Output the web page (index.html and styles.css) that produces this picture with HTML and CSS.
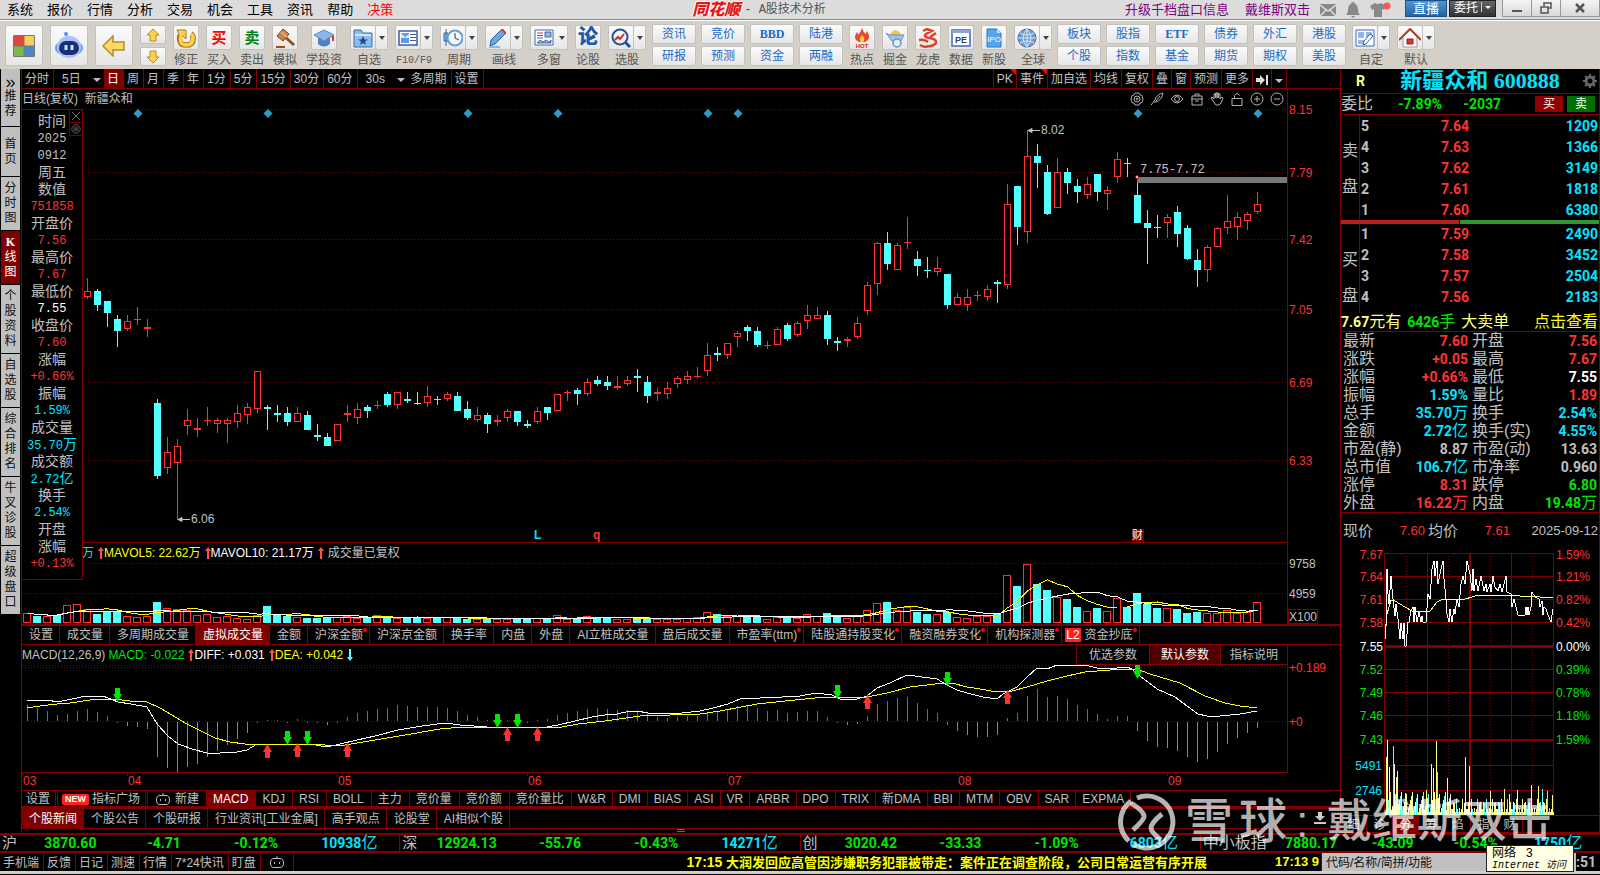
FILE: index.html
```html
<!DOCTYPE html>
<html lang="zh-CN">
<head>
    <meta charset="UTF-8">
    <meta name="viewport" content="width=device-width, initial-scale=1.0">
    <title>同花顺 - A股技术分析</title>
    <link rel="stylesheet" href="styles.css">
</head>
<body>
    <svg class="defs" aria-hidden="true">
        <symbol id="up" viewBox="0 0 6 12"><path d="M3 0L6 4H4V12H2V4H0z"/></symbol>
        <symbol id="down" viewBox="0 0 6 12"><path d="M3 12L6 8H4V0H2V8H0z"/></symbol>
        <symbol id="gear" viewBox="0 0 14 14"><path fill="none" stroke="currentColor" d="M5 1h4l1 2 2 .5L13 7l-1 3.500-2 .5-1 2H5l-1-2-2-.5L1 7l1-3.500L4 3z"/><circle cx="7" cy="7" r="3" fill="none" stroke="currentColor"/><circle cx="7" cy="7" r="1" fill="none" stroke="currentColor"/></symbol>
        <symbol id="robot" viewBox="0 0 16 14"><path fill="none" stroke="currentColor" d="M5 3.500h6q3.500 0 3.500 4.500t-3.500 4.500H5Q1.500 12.500 1.500 8T5 3.500zM8 3V1M5.500 7v2M10.500 7v2"/></symbol>
    </svg>
    <div class="app">
        <header class="titlebar">
            <nav class="menu">
                <a href="#">系统</a><a href="#">报价</a><a href="#">行情</a><a href="#">分析</a><a href="#">交易</a><a href="#">机会</a><a href="#">工具</a><a href="#">资讯</a><a href="#">帮助</a><a href="#" class="red">决策</a>
            </nav>
            <div class="title"><b>同花顺</b><span>- A股技术分析</span></div>
            <div class="account">
                <a href="#">升级千档盘口信息</a>
                <a href="#">戴维斯双击</a>
                <svg width="16" height="12" viewBox="0 0 16 12"><path fill="#888" d="M0 0h16v12H0z"/><path fill="none" stroke="#ddd" stroke-width="1.500" d="M0 1l8 6 8-6M0 12l6-6M16 12l-6-6"/></svg>
                <svg width="14" height="16" viewBox="0 0 14 16"><path fill="#888" d="M7 0q2 0 2 2 3 1 3 6 0 3 2 5H0q2-2 2-5 0-5 3-6 0-2 2-2zM5 14h4l-2 2z"/></svg>
                <svg width="21" height="15" viewBox="0 0 21 15"><path fill="#888" d="M5 1q3 2 6 0l5 3-2 4-2-1v8H4V7L2 8 0 4z"/><circle cx="17" cy="4" r="3.500" fill="#f55"/></svg>
            </div>
            <button class="live">直播</button>
            <button class="trade">委托<i></i><span class="caret"></span></button>
            <div class="window">
                <button aria-label="最小化"><svg width="12" height="12"><path fill="#555" d="M1 8h10v2H1z"/></svg></button>
                <button aria-label="还原"><svg width="12" height="12"><path fill="none" stroke="#555" stroke-width="1.500" d="M4 4V1h7v5H8M1 5h7v6H1z"/></svg></button>
                <button aria-label="关闭"><svg width="12" height="12"><path fill="none" stroke="#555" stroke-width="2.500" d="M2 2l8 8M10 2l-8 8"/></svg></button>
            </div>
        </header>

        <div class="toolbar">
            <button class="big" aria-label="首页"><svg width="22" height="22" viewBox="0 0 22 22"><path fill="#e0453c" d="M1 1h10v10H1z"/><path fill="#f7cf5b" d="M11 1h10v10H11z"/><path fill="#7fb84a" d="M1 11h10v10H1z"/><path fill="#4b86c8" d="M11 11h10v10H11z"/><path fill="none" stroke="#777" d="M.5 .5h21v21H.5zM11 1v20M1 11h20"/></svg></button>
            <button class="big" aria-label="助手"><svg width="30" height="30" viewBox="0 0 30 30"><circle cx="12" cy="3" r="2" fill="#5a8cf0"/><path stroke="#5a8cf0" d="M12 3l2 4"/><ellipse cx="15" cy="17" rx="14" ry="8" fill="#6d9bf5"/><ellipse cx="15" cy="16" rx="12" ry="11" fill="#a9c2fb"/><rect x="5" y="10" width="20" height="14" rx="7" fill="#1d2f73"/><path stroke="#b8ecff" stroke-width="3" d="M12 14v5M18 14v5"/></svg></button>
            <button class="big" aria-label="后退"><svg width="24" height="22" viewBox="0 0 24 22"><path fill="#ffd964" stroke="#b58a2a" stroke-width="1.500" d="M1 11L11 1v6h11v8H11v6z"/></svg></button>
            <div class="updown">
                <button aria-label="上"><svg width="14" height="14" viewBox="0 0 14 14"><path fill="#ffd24a" stroke="#b58a2a" d="M7 1l6 6h-3v6H4V7H1z"/></svg></button>
                <button aria-label="下"><svg width="14" height="14" viewBox="0 0 14 14"><path fill="#ffd24a" stroke="#b58a2a" d="M7 13L1 7h3V1h6v6h3z"/></svg></button>
            </div>
            <button class="tool"><span class="ico"><svg width="20" height="20" viewBox="0 0 20 20"><path fill="none" stroke="#a87a20" stroke-width="5.500" d="M4 7Q2 17 10 17t7-7q0-3-2-4"/><path fill="#ffd24a" stroke="#a87a20" d="M1 2h9v9L7 8 4 9z"/><path fill="none" stroke="#ffd24a" stroke-width="3.500" d="M5 8Q3 17 10 17t7-7q0-3-2-4"/></svg></span>修正</button>
            <button class="tool"><span class="ico buy">买</span>买入</button>
            <button class="tool"><span class="ico sell">卖</span>卖出</button>
            <button class="tool"><span class="ico"><svg width="20" height="20" viewBox="0 0 20 20"><path stroke="#8c5226" stroke-width="3" d="M9 8l10 9"/><path fill="#c58449" stroke="#7c431b" d="M8 1l6 5-6 7-6-5z"/><path stroke="#e3ad77" stroke-width="2" d="M6 4l6 5"/><path fill="#a14c12" d="M1 18h9v2H1z"/></svg></span>模拟</button>
            <button class="tool wide"><span class="ico"><svg width="22" height="20" viewBox="0 0 22 20"><path fill="#4d83c0" d="M5 9v7q6 5 12 0V9z"/><path fill="#8ab8ea" stroke="#5a88bb" d="M11 2l10 5-10 6L1 7z"/><path stroke="#d33" stroke-width="2" d="M20 8v5"/></svg></span>学投资</button>
            <button class="tool split"><span class="ico"><svg width="20" height="20" viewBox="0 0 20 20"><path fill="#8bbdf0" stroke="#3d6ea5" d="M1 2h7l2 3h9v14H1z"/><path fill="#cfe4fa" d="M2 6h16v2H2z"/><path fill="#1d4c8c" d="M10 8l1.500 3.500H15l-3 2 1 3.500-3-2-3 2 1-3.500-3-2h3.500z"/></svg></span><span class="drop"><i class="caret"></i></span><em>自选</em></button>
            <button class="tool split"><span class="ico"><svg width="20" height="20" viewBox="0 0 20 20"><path fill="#fff" stroke="#3d5e9a" stroke-width="1.500" d="M1 3h18v14H1z"/><path fill="#5f9be0" d="M3 5h8v10H3z"/><path fill="#cfe4fa" d="M3 5l4 4 4-3v4H3z"/><path stroke="#3d5e9a" d="M12 6.500h6M12 9.500h6M12 12.500h6"/></svg></span><span class="drop"><i class="caret"></i></span><em class="mono">F10/F9</em></button>
            <button class="tool split"><span class="ico"><svg width="20" height="20" viewBox="0 0 20 20"><path fill="#9cc4ee" stroke="#2f66a8" d="M3 1v17M1 5h4v8H1z"/><circle cx="12" cy="10" r="7.500" fill="#f4f9ff" stroke="#6b9cd0" stroke-width="2"/><path fill="none" stroke="#333" d="M12 5v5l4 2"/></svg></span><span class="drop"><i class="caret"></i></span><em>周期</em></button>
            <button class="tool split"><span class="ico"><svg width="20" height="20" viewBox="0 0 20 20"><path fill="#6fa6de" stroke="#31649c" d="M2 18l1-6L14 1l4 4L7 16z"/><path fill="#d9362b" d="M13 2l2-1 3 3-1 2z"/><path stroke="#8db7e4" stroke-width="2" d="M1 19h11"/></svg></span><span class="drop"><i class="caret"></i></span><em>画线</em></button>
            <button class="tool split plain"><span class="ico"><svg width="20" height="20" viewBox="0 0 20 20"><path fill="#fff" stroke="#4667a8" d="M1 2h18v15H1z"/><path stroke="#d33" d="M3 5h6"/><path stroke="#4667a8" d="M3 7.500h6M3 10h6"/><path fill="#8db7e4" stroke="#4667a8" d="M11 4h6v5h-6zM3 15l3-3 3 2 3-2 3 2 2-2v3z"/></svg></span><span class="drop"><i class="caret"></i></span><em>多窗</em></button>
            <button class="tool"><span class="ico lun">论</span>论股</button>
            <button class="tool split"><span class="ico"><svg width="20" height="20" viewBox="0 0 20 20"><circle cx="9" cy="9" r="7.500" fill="none" stroke="#27509b" stroke-width="2"/><path stroke="#27509b" stroke-width="3" d="M14 14l5 5"/><path fill="none" stroke="#c8312b" stroke-width="2" d="M4 12l3-3 2 2 4-5"/></svg></span><span class="drop"><i class="caret"></i></span><em>选股</em></button>
            <div class="pairs">
                <button>资讯</button><button>竞价</button><button class="serif">BBD</button><button>陆港</button>
                <button>研报</button><button>预测</button><button>资金</button><button>两融</button>
            </div>
            <button class="tool"><span class="ico"><svg width="20" height="20" viewBox="0 0 20 20"><path fill="#e6492d" d="M10 0q1 4 4 6 0-2 1-3 5 8-2 11H7Q0 11 5 4q1 1 1 3 3-3 4-7z"/><path fill="#ffd24a" d="M10 7q4 4 1 7H9Q6 11 10 7z"/><text x="10" y="20" class="hot">HOT</text></svg></span>热点</button>
            <button class="tool"><span class="ico"><svg width="20" height="20" viewBox="0 0 20 20"><path fill="#f4c04a" d="M4 7l4-4 2-1 3 1 4 4z"/><path fill="#9cc4ee" stroke="#6b93bd" d="M1 5l3 2h15l-3 6H7z"/><circle cx="12" cy="15" r="4" fill="#dcebfa" stroke="#6b93bd" stroke-width="1.500"/></svg></span>掘金</button>
            <button class="tool"><span class="ico"><svg width="20" height="20" viewBox="0 0 20 20"><path fill="none" stroke="#d8432c" stroke-width="2.500" d="M5 3l4-2 5 2-6 3q-3 3 3 4 8 1 7 5-3 4-9 3M1 12q6-1 9 2M2 17q5 3 8 1M18 5l-6 4"/></svg></span>龙虎</button>
            <button class="tool"><span class="ico"><svg width="20" height="20" viewBox="0 0 20 20"><path fill="#fff" stroke="#4667a8" stroke-width="1.500" d="M1 2h18v16H1z"/><path fill="#8aa6d6" d="M1 2h18v3H1z"/><text x="10" y="15" class="pe">PE</text></svg></span>数据</button>
            <button class="tool"><span class="ico"><svg width="20" height="20" viewBox="0 0 20 20"><path fill="#55a7ec" stroke="#2a78c2" d="M3 1h10l4 4v14H3z"/><path fill="#cfe6fb" d="M13 1v4h4z"/><text x="10" y="14" class="ipo">IPO</text></svg></span>新股</button>
            <button class="tool split"><span class="ico"><svg width="20" height="20" viewBox="0 0 20 20"><circle cx="10" cy="10" r="9" fill="#6f9ccd" stroke="#44699c"/><path fill="none" stroke="#d8e8f8" d="M1 10h18M3 5q7 4 14 0M3 15q7-4 14 0M10 1v18M10 1Q2 10 10 19M10 1q8 9 0 18"/></svg></span><span class="drop"><i class="caret"></i></span><em>全球</em></button>
            <div class="pairs six">
                <button>板块</button><button>股指</button><button class="serif">ETF</button><button>债券</button><button>外汇</button><button>港股</button>
                <button>个股</button><button>指数</button><button>基金</button><button>期货</button><button>期权</button><button>美股</button>
            </div>
            <button class="tool split"><span class="ico"><svg width="20" height="20" viewBox="0 0 20 20"><path fill="#fff" stroke="#3f6cab" d="M1 2h18v16H1z"/><path fill="#8fb8ea" d="M3 4h6v6H3zM11 4h6v6h-6zM3 12h6v4H3z"/><path fill="#fff" stroke="#31649c" d="M8 17l1-4 6-7 3 2-7 8z"/></svg></span><span class="drop"><i class="caret"></i></span><em>自定</em></button>
            <button class="tool split"><span class="ico"><svg width="22" height="20" viewBox="0 0 22 20"><path fill="#fbfbfb" stroke="#999" d="M4 9v10h14V9l-7-7z"/><path fill="none" stroke="#a9442e" stroke-width="2" d="M0 12L11 1l11 11"/><path fill="#d33" stroke="#822" d="M8 11h6v5H8z"/></svg></span><span class="drop"><i class="caret"></i></span><em>默认</em></button>
        </div>

        <div class="work">
            <nav class="side">
                <button class="first"><i>»</i>推荐</button>
                <button>首页</button>
                <button>分时图</button>
                <button class="active"><b>K</b>线图</button>
                <button>个股资料</button>
                <button>自选股</button>
                <button>综合排名</button>
                <button>牛叉诊股</button>
                <button>超级盘口</button>
            </nav>

            <main class="center">
                <div class="periods">
                    <button>分时</button><button class="pick">5日<i class="caret"></i></button><button class="active">日</button><button>周</button><button>月</button><button>季</button><button>年</button><button>1分</button><button>5分</button><button>15分</button><button>30分</button><button>60分</button><button class="pick">30s<i class="caret"></i></button><button>多周期</button><button>设置</button>
                    <div class="extra">
                        <button class="new">PK</button><button class="new">事件</button><button>加自选</button><button>均线</button><button>复权</button><button>叠</button><button>窗</button><button>预测</button><button>更多</button><button aria-label="移到最后"><svg width="12" height="12"><path fill="#ddd" d="M0 4h4V1l5 5-5 5V8H0zM10 1h2v10h-2z"/></svg></button><button aria-label="展开"><i class="caret"></i></button>
                    </div>
                </div>

                <section class="kline">
                    <div class="plot">
                        <div class="caption">
                            <span>日线(复权)&nbsp; 新疆众和</span>
                            <div class="draw">
                                <svg viewBox="0 0 14 14"><use href="#gear"/></svg>
                                <svg viewBox="0 0 14 14"><path d="M1 13L5 8Q6 3 13 1 12 8 6 10H4M6 9l4-5"/></svg>
                                <svg viewBox="0 0 14 14"><path d="M1 7q6-8 12 0-6 8-12 0z"/><circle cx="7" cy="7" r="2.500"/></svg>
                                <svg viewBox="0 0 14 14"><path d="M2 7V4h10v3M1 7h12M2 7v6h10V7M5 4V2h4v2M5 9h4"/></svg>
                                <svg viewBox="0 0 14 14"><path d="M3 9L1 6l1-1 2 2V2h1.500v4V1H7v5V1h1.500v5V2H10v5l2-2 1 1-2 5-2 2H6z"/></svg>
                                <svg viewBox="0 0 14 14"><path d="M2 6.500h10v7H2zM4.500 6V3.500q2.500-4 5 0"/></svg>
                                <svg viewBox="0 0 14 14"><circle cx="7" cy="7" r="6"/><path d="M7 4v6M4 7h6"/></svg>
                                <svg viewBox="0 0 14 14"><circle cx="7" cy="7" r="6"/><path d="M4 7h6"/></svg>
                            </div>
                        </div>
                        <svg id="candles"></svg>
                        <div class="caption vol">
                            <span class="cyan">万</span>
                            <svg class="arr"><use href="#up"/></svg><span class="yellow">MAVOL5: 22.62万</span>
                            <svg class="arr"><use href="#up"/></svg><span class="white">MAVOL10: 21.17万</span>
                            <svg class="arr"><use href="#up"/></svg><span class="note">成交量已复权</span>
                        </div>
                        <svg id="volume"></svg>
                    </div>
                    <svg class="axis" id="axisPrice"></svg>

                    <aside class="cursor">
                        <div class="corner"><button aria-label="关闭"><svg width="10" height="10"><path d="M1 1l8 8M9 1l-8 8"/></svg></button><button aria-label="设置"><svg width="10" height="10"><use href="#gear"/></svg></button></div>
                        <dl>
                            <dt>时间</dt><dd class="grey">2025</dd><dd class="grey">0912</dd><dt>周五</dt>
                            <dt>数值</dt><dd class="up">751858</dd>
                            <dt>开盘价</dt><dd class="up">7.56</dd>
                            <dt>最高价</dt><dd class="up">7.67</dd>
                            <dt>最低价</dt><dd class="white">7.55</dd>
                            <dt>收盘价</dt><dd class="up">7.60</dd>
                            <dt>涨幅</dt><dd class="up">+0.66%</dd>
                            <dt>振幅</dt><dd class="cyan">1.59%</dd>
                            <dt>成交量</dt><dd class="cyan">35.70<span>万</span></dd>
                            <dt>成交额</dt><dd class="cyan">2.72<span>亿</span></dd>
                            <dt>换手</dt><dd class="cyan">2.54%</dd>
                            <dt>开盘</dt><dt>涨幅</dt><dd class="up">+0.13%</dd>
                        </dl>
                    </aside>
                </section>

                <div class="tabs thick">
                    <button>设置</button><button>成交量</button><button>多周期成交量</button><button class="active">虚拟成交量</button><button>金额</button><button class="dot">沪深金额</button><button>沪深京金额</button><button>换手率</button><button>内盘</button><button>外盘</button><button>AI立桩成交量</button><button>盘后成交量</button><button class="dot">市盈率(ttm)</button><button class="dot">陆股通持股变化</button><button class="dot">融资融券变化</button><button class="dot">机构探测器</button><button class="dot"><b class="l2">L2</b>资金抄底</button>
                </div>

                <section class="kline macd">
                    <div class="plot">
                        <div class="caption">
                            <span>MACD(12,26,9)</span><span class="green gap">MACD: -0.022</span>
                            <svg class="arr"><use href="#up"/></svg><span class="white">DIFF: +0.031</span>
                            <svg class="arr"><use href="#up"/></svg><span class="yellow">DEA: +0.042</span>
                            <svg class="arr blue"><use href="#down"/></svg>
                            <div class="params"><button>优选参数</button><button class="active">默认参数</button><button>指标说明</button></div>
                        </div>
                        <svg id="macd"></svg>
                    </div>
                    <svg class="axis" id="axisMacd"></svg>
                </section>
                <svg id="months"></svg>

                <div class="tabs low">
                    <button>设置</button><i class="sep"></i><button class="market"><b class="newtag">NEW</b>指标广场</button><i class="sep"></i><button class="create"><svg width="16" height="14"><use href="#robot"/></svg>新建</button><button class="active main">MACD</button><button class="main">KDJ</button><button class="main">RSI</button><button class="main">BOLL</button><button class="main">主力</button><button class="main">竞价量</button><button class="main">竞价额</button><button class="main">竞价量比</button><button>W&amp;R</button><button>DMI</button><button>BIAS</button><button>ASI</button><button>VR</button><button>ARBR</button><button>DPO</button><button>TRIX</button><button>新DMA</button><button>BBI</button><button>MTM</button><button>OBV</button><button>SAR</button><button>EXPMA</button>
                </div>
                <div class="tabs news">
                    <button class="active">个股新闻</button><button>个股公告</button><button>个股研报</button><button>行业资讯[工业金属]</button><button>高手观点</button><button>论股堂</button><button>AI相似个股</button>
                    <svg class="pull" width="12" height="12"><path fill="#ccc" d="M4 0h4v4h3L6 9 1 4h3zM0 10h12v2H0z"/></svg>
                </div>
                <div class="splitter"><i></i></div>
            </main>

            <aside class="quote">
                <h1><span class="r">R</span><span class="name">新疆众和 600888</span><svg width="14" height="14" viewBox="0 0 14 14"><circle cx="7" cy="7" r="4" fill="none" stroke="#666" stroke-width="3"/><path stroke="#666" stroke-width="2" d="M7 0v3M7 11v3M0 7h3M11 7h3M2 2l2 2M10 10l2 2M12 2l-2 2M4 10l-2 2"/></svg></h1>
                <div class="ratio"><span>委比</span><b>-7.89%</b><b>-2037</b><button class="b">买</button><button class="s">卖</button></div>
                <div class="book">
                    <div class="face"><span>卖</span><span>盘</span></div>
                    <table>
                        <tr><th>5</th><td>7.64</td><td>1209</td></tr>
                        <tr><th>4</th><td>7.63</td><td>1366</td></tr>
                        <tr><th>3</th><td>7.62</td><td>3149</td></tr>
                        <tr><th>2</th><td>7.61</td><td>1818</td></tr>
                        <tr><th>1</th><td>7.60</td><td>6380</td></tr>
                    </table>
                </div>
                <div class="force"><i></i><i></i></div>
                <div class="book bids">
                    <div class="face"><span>买</span><span>盘</span></div>
                    <table>
                        <tr><th>1</th><td>7.59</td><td>2490</td></tr>
                        <tr><th>2</th><td>7.58</td><td>3452</td></tr>
                        <tr><th>3</th><td>7.57</td><td>2504</td></tr>
                        <tr><th>4</th><td>7.56</td><td>2183</td></tr>
                    </table>
                </div>
                <div class="bigorder"><span><b>7.67</b>元有</span><span class="green"><b>6426</b>手</span><span>大卖单</span><a href="#">点击查看</a></div>
                <table class="facts">
                    <tr><th>最新</th><td class="up">7.60</td><th>开盘</th><td class="up">7.56</td></tr>
                    <tr><th>涨跌</th><td class="up">+0.05</td><th>最高</th><td class="up">7.67</td></tr>
                    <tr><th>涨幅</th><td class="up">+0.66%</td><th>最低</th><td class="white">7.55</td></tr>
                    <tr><th>振幅</th><td class="cyan">1.59%</td><th>量比</th><td class="up">1.89</td></tr>
                    <tr><th>总手</th><td class="cyan">35.70<i>万</i></td><th>换手</th><td class="cyan">2.54%</td></tr>
                    <tr><th>金额</th><td class="cyan">2.72<i>亿</i></td><th>换手(实)</th><td class="cyan">4.55%</td></tr>
                    <tr><th>市盈(静)</th><td>8.87</td><th>市盈(动)</th><td>13.63</td></tr>
                    <tr><th>总市值</th><td class="cyan">106.7<i>亿</i></td><th>市净率</th><td>0.960</td></tr>
                    <tr><th>涨停</th><td class="up">8.31</td><th>跌停</th><td class="green">6.80</td></tr>
                    <tr><th>外盘</th><td class="up">16.22<i>万</i></td><th>内盘</th><td class="green">19.48<i>万</i></td></tr>
                </table>
                <div class="now"><span>现价</span><em>7.60</em><span>均价</span><em>7.61</em><time>2025-09-12</time></div>
                <svg id="minute" viewBox="6 30 258 266"></svg>
                <div class="minitabs"><button>细</button><button>诊</button><button class="active">分</button><button>筹</button><button>焰</button><button>指</button><button>财</button></div>
            </aside>
        </div>

        <div class="indexes">
            <div><span>沪</span><b>3870.60</b><b>-4.71</b><b>-0.12%</b><b class="cyan">10938<i>亿</i></b></div>
            <div><span>深</span><b>12924.13</b><b>-55.76</b><b>-0.43%</b><b class="cyan">14271<i>亿</i></b></div>
            <div><span>创</span><b>3020.42</b><b>-33.33</b><b>-1.09%</b><b class="cyan">6803<i>亿</i></b></div>
            <div class="long"><span>中小板指</span><b>7880.17</b><b>-43.09</b><b>-0.54%</b><b class="cyan">1750<i>亿</i></b></div>
        </div>

        <footer class="status">
            <button>手机端</button><button>反馈</button><button>日记</button><button>测速</button><button>行情</button><button>7*24快讯</button><button>盯盘</button><button class="bot" aria-label="问财"><svg width="16" height="14"><use href="#robot"/></svg></button>
            <p class="ticker"><b>17:15</b> 大润发回应高管因涉嫌职务犯罪被带走：案件正在调查阶段，公司日常运营有序开展</p>
            <p class="next">17:13 9</p>
            <input type="text" aria-label="键盘精灵" placeholder="代码/名称/简拼/功能">
            <span class="clock">:51</span>
        </footer>

        <div class="watermark">
            <svg width="58" height="58" viewBox="-29 -29 58 58"><path d="M-10-24A26 26 0 1 1-14 22M-16-21A26 26 0 0 0-20 17L-18 19"/><path d="M-16-19Q-2-10-3-5-4-1-14 8M15-8Q4 1 4 6 4 10 14 18"/></svg>
            <span class="brand"><i>雪</i><i>球</i></span><span class="colon">:</span><span>戴维斯双击</span>
        </div>
        <div class="tip">网络&nbsp;&nbsp; 3<em>Internet 访问</em></div>
    </div>
    <script src="script.js"></script>
</body>
</html>
```
FILE: styles.css
```css
* {
    box-sizing: border-box;
}
body {
    margin: 0;
    background: #000;
    color: #c0c0c0;
    font-family: "Liberation Sans", "Noto Sans CJK SC", sans-serif;
    font-size: 12px;
    line-height: 16px;
}
button {
    font: inherit;
    color: inherit;
    background: none;
    border: none;
    padding: 0;
    margin: 0;
    white-space: nowrap;
    cursor: pointer;
}
a {
    color: inherit;
    text-decoration: none;
}
i, em {
    font-style: normal;
}
svg {
    display: block;
    flex: none;
}
.defs {
    display: none;
}
.app {
    position: relative;
    overflow: hidden;
    min-width: 1400px;
}
.caret {
    display: inline-block;
    border: 4px solid transparent;
    border-top-color: currentColor;
    border-bottom: none;
}
.up { color: #ff3232; }
.green { color: #00e600; }
.cyan { color: #00e4ff; }
.yellow { color: #ffff00; }
.white { color: #fff; }
.grey { color: #c0c0c0; }

/* title bar */
.titlebar {
    display: flex;
    align-items: center;
    height: 20px;
    background: #dcdcdc;
    border-bottom: 1px solid #8c8484;
    color: #000;
    font-size: 13px;
}
.menu {
    display: flex;
    gap: 14px;
    padding-left: 7px;
}
.menu .red {
    color: #f00;
}
.title {
    display: flex;
    align-items: center;
    gap: 4px;
    margin: 0 auto;
    color: #555;
}
.title b {
    color: #e01818;
    font-size: 16px;
    font-weight: 900;
    font-style: italic;
    text-shadow: 1px 0 #fff, -1px 0 #fff, 0 1px #fff, 0 -1px #fff;
}
.title span {
    font-family: "Liberation Mono", "Noto Sans CJK SC", monospace;
    font-size: 12px;
}
.account {
    display: flex;
    align-items: center;
    gap: 10px;
    color: #800080;
    margin-right: 14px;
}
.account a + a {
    margin-left: 6px;
}
.live, .trade {
    height: 17px;
    width: 42px;
    align-self: flex-start;
    color: #fff;
    line-height: 15px;
    background: linear-gradient(#4f97d4, #2464a4);
    border: 1px solid #1d4f86;
}
.trade {
    width: 47px;
    margin: 0 6px 0 2px;
    background: linear-gradient(#666, #333);
    border-color: #222;
    font-size: 12px;
}
.trade i {
    display: inline-block;
    height: 10px;
    margin: 0 3px;
    border-left: 1px solid #ccc;
}
.trade .caret {
    border-width: 3px;
    border-bottom: none;
    vertical-align: 3px;
}
.window {
    display: flex;
    align-self: flex-start;
    height: 17px;
    border: 1px solid #999;
    border-top: none;
}
.window button {
    display: flex;
    align-items: center;
    justify-content: center;
    width: 29px;
    background: linear-gradient(#f4f4f4, #d8d8d8);
    border-right: 1px solid #999;
}
.window button:last-child {
    width: 38px;
    border: none;
}

/* toolbar */
.toolbar {
    display: flex;
    align-items: flex-start;
    gap: 7px;
    height: 49px;
    padding: 4px 0 0 5px;
    background: #d4d0c8;
    border-top: 1px solid #fff;
    color: #555;
}
.big, .updown button, .pairs button, .ico, .drop {
    display: flex;
    align-items: center;
    justify-content: center;
    background: linear-gradient(#fbfbfb, #e6e6e6);
    border: 1px solid #c2c2c2;
    border-radius: 2px;
}
.big {
    width: 38px;
    height: 41px;
    flex: none;
}
.updown {
    display: grid;
    gap: 3px;
}
.updown button {
    width: 26px;
    height: 19px;
}
.tool {
    display: flex;
    flex-direction: column;
    align-items: center;
    gap: 2px;
    line-height: 17px;
}
.wide {
    padding: 0 1px;
}
.ico {
    width: 26px;
    height: 25px;
    font-size: 15px;
    font-weight: bold;
}
.buy { color: #f00; }
.sell { color: #008020; }
.lun {
    color: #1d57b0;
    font-size: 20px;
    font-weight: 900;
}
.split {
    display: grid;
    grid-template-columns: 26px 12px;
    gap: 2px 0;
}
.split em {
    grid-column: 1 / 3;
}
.drop {
    height: 25px;
    border-left: none;
    color: #444;
}
.plain .ico {
    border-right: none;
}
.drop .caret {
    border-width: 4px 3px 0;
}
.mono {
    font-family: "Liberation Mono", monospace;
    font-size: 10px;
}
.pairs {
    display: grid;
    grid-template-columns: repeat(4, 44px);
    gap: 2px 5px;
    margin: -1px -1px 0;
}
.pairs.six {
    grid-template-columns: repeat(6, 44px);
    margin-left: -2px;
}
.pairs button {
    height: 20px;
    color: #1c69c4;
}
.pairs .serif {
    font-family: "Liberation Serif", serif;
    font-weight: bold;
}
.hot {
    font: bold 6px "Liberation Sans", sans-serif;
    fill: #d22;
    text-anchor: middle;
}
.pe {
    font: bold 9px "Liberation Sans", sans-serif;
    fill: #2b3f7a;
    text-anchor: middle;
}
.ipo {
    font: 8px "Liberation Sans", sans-serif;
    fill: #fff;
    text-anchor: middle;
}

/* work area */
.work {
    display: flex;
}
.side {
    width: 21px;
    flex: none;
    padding: 0 1px;
    display: flex;
    flex-direction: column;
    gap: 1px;
}
.side button {
    min-height: 49px;
    padding: 4px 3px;
    background: #c0c0c0;
    color: #111;
    line-height: 15px;
    white-space: normal;
    word-break: break-all;
}
.side .first {
    min-height: 57px;
}
.side i {
    display: block;
    font-size: 18px;
    line-height: 13px;
}
.side .active {
    background: #800000;
    color: #fff;
}
.side b {
    display: block;
    font-family: "Liberation Serif", serif;
}
.center {
    flex: 1;
    min-width: 0;
    border-left: 1px solid #800000;
}
.periods {
    display: flex;
    height: 20px;
    border-bottom: 1px solid #800000;
}
.periods button {
    padding: 2px 4px 0 3px;
    border-right: 1px solid #800000;
    line-height: 17px;
}
.periods .pick {
    display: flex;
    align-items: center;
    justify-content: space-between;
    width: 50px;
    padding: 2px 3px 0 8px;
    border: none;
}
.periods .active {
    background: #800000;
    color: #fff;
}
.extra {
    display: flex;
    margin-left: auto;
    margin-right: 53px;
    border-left: 1px solid #800000;
}
.extra button {
    position: relative;
    padding: 2px 3px 0;
}
.new::after {
    content: "";
    position: absolute;
    top: 0;
    right: 0;
    border: 3px solid;
    border-color: #f00 #f00 transparent transparent;
}
.kline {
    position: relative;
    display: flex;
}
.plot {
    flex: 1;
    min-width: 0;
    border-right: 1px solid #800000;
    overflow: hidden;
}
.axis {
    width: 52px;
    height: 535px;
}
.macd .axis {
    height: 128px;
}
.caption {
    display: flex;
    align-items: center;
    height: 20px;
    white-space: nowrap;
}
.draw {
    display: flex;
    gap: 6px;
    margin-left: auto;
    padding-right: 3px;
}
.draw svg {
    width: 14px;
    height: 14px;
    fill: none;
    stroke: #b0b0b0;
    color: #b0b0b0;
}
.caption.vol {
    padding-left: 60px;
}
.arr {
    width: 6px;
    height: 12px;
    margin: 0 0 0 4px;
    fill: #ff5050;
}
.arr.blue {
    fill: #54ffff;
}
.note {
    margin-left: 4px;
}
.gap {
    margin-left: 3px;
}
#candles, #volume, #macd {
    width: 100%;
}
#candles {
    height: 434px;
    border-bottom: 1px solid #800000;
}
#volume {
    height: 61px;
}
#macd {
    height: 108px;
    border-bottom: 1px solid #800000;
}
#months {
    width: 100%;
    height: 17px;
}

/* cursor data window */
.cursor {
    position: absolute;
    left: 0;
    top: 20px;
    width: 61px;
    height: 471px;
    padding-top: 4px;
    background: #000;
    border: 1px solid #800000;
    border-left: none;
    text-align: center;
}
.cursor dl, .cursor dd {
    margin: 0;
}
.cursor dt, .cursor dd {
    height: 17px;
    line-height: 15px;
    font-size: 14px;
}
.cursor dd {
    font-family: "Liberation Mono", "Noto Sans CJK SC", monospace;
    font-size: 12px;
    line-height: 17px;
}
.cursor dd span {
    font-size: 14px;
}
.corner {
    position: absolute;
    top: 0;
    right: 0;
}
.corner button {
    display: block;
    padding: 1px;
    border: solid #800000;
    border-width: 0 0 1px 1px;
    color: #777;
    stroke: #777;
}

/* tab strips */
.tabs {
    display: flex;
    height: 21px;
    border-bottom: 1px solid #800000;
}
.tabs.thick {
    border-top: 2px solid #800000;
}
.tabs button {
    position: relative;
    padding: 0 6px 0 7px;
    border-right: 1px solid #800000;
    line-height: 18px;
}
.tabs .active {
    background: #800000;
    color: #fff;
}
.dot::after {
    content: "";
    position: absolute;
    top: 2px;
    right: 2px;
    width: 4px;
    height: 4px;
    border-radius: 2px;
    background: #f00;
}
.l2, .newtag {
    display: inline-block;
    margin: 0 4px 0 -4px;
    padding: 0 1px;
    background: #ff2020;
    color: #fff;
    line-height: 14px;
    font-weight: normal;
}
.params {
    display: flex;
    align-self: stretch;
    margin-left: auto;
    border-left: 1px solid #800000;
    border-bottom: 1px solid #800000;
}
.params button {
    width: 72px;
}
.params button:last-child {
    width: 66px;
}
.params .active {
    background: #500000;
    color: #fff;
    border: solid #800000;
    border-width: 0 1px;
}
.tabs.low {
    height: 19px;
    border-top: 1px solid #800000;
    border-bottom: 3px solid #800000;
}
.tabs.low button {
    padding: 0 6px;
    line-height: 16px;
}
.tabs.low .main {
    padding: 0 7px 0 6px;
}
.tabs.low button:first-child {
    padding: 0 5px 0 4px;
}
.sep {
    width: 2px;
    border-right: 1px solid #800000;
}
.tabs.low .market {
    padding: 0 5px 0 8px;
}
.newtag {
    margin: 0 3px 0 -4px;
    padding: 0 3px;
    border-radius: 2px;
    font-size: 9px;
    font-weight: bold;
    line-height: 11px;
    vertical-align: 1px;
}
.tabs.low .create {
    display: flex;
    align-items: center;
    gap: 4px;
    padding: 0 7px;
}
.tabs.news {
    height: 20px;
}
.news .pull {
    margin: 3px 14px 0 auto;
}
.splitter {
    height: 4px;
}
.splitter i {
    display: block;
    width: 8px;
    height: 3px;
    margin: 0 auto;
    border: solid #666;
    border-width: 1px 0;
}

/* quote panel */
.quote {
    width: 260px;
    flex: none;
    border: solid #800000;
    border-width: 0 1px;
}
.quote h1 {
    display: flex;
    align-items: center;
    justify-content: space-between;
    height: 24px;
    margin: 0;
    padding: 0 2px 0 15px;
    color: #00e4ff;
    font: bold 22px/24px "Liberation Serif", "Noto Sans CJK SC", serif;
}
.quote .r {
    color: #ffff80;
    font-size: 14px;
    font-family: "Roboto", sans-serif;
}
.quote .name {
    margin-left: 12px;
}
.ratio {
    display: flex;
    align-items: center;
    height: 21px;
    border-top: 1px solid #800000;
    font-size: 16px;
}
.ratio b {
    width: 69px;
    text-align: right;
    color: #00e600;
    font: bold 14px "Roboto", sans-serif;
}
.ratio b + b {
    width: 59px;
}
.ratio button {
    width: 28px;
    height: 16px;
    margin-left: 4px;
    background: #900000;
    color: #fff;
    font-size: 12px;
    line-height: 15px;
}
.ratio .b {
    margin-left: auto;
}
.ratio .s {
    background: #007000;
    margin-right: 4px;
}
.book {
    display: flex;
    height: 106px;
    padding-top: 1px;
    border-top: 1px solid #800000;
}
.face {
    display: flex;
    flex-direction: column;
    justify-content: center;
    gap: 20px;
    width: 19px;
    margin-top: -1px;
    padding: 3px 0 0 1px;
    border-right: 1px solid #800000;
    font-size: 16px;
}
.book table {
    flex: 1;
    border-collapse: collapse;
}
.book td, .book th {
    height: 21px;
    padding: 0 1px;
    color: #00e4ff;
    text-align: right;
    font: bold 14px/21px "Roboto", sans-serif;
}
.book th {
    width: 10px;
    color: #c0c0c0;
    text-align: left;
}
.book th + td {
    width: 100px;
    color: #ff3232;
}
.force {
    display: flex;
    gap: 1px;
    height: 4px;
}
.force i {
    flex: 46;
    background: #b42020;
}
.force i + i {
    flex: 54;
    background: #329632;
}
.bids {
    height: 89px;
    padding: 0 0 5px;
    border: none;
}
.bids .face {
    margin: 0 0 -5px;
    padding-top: 18px;
}
.bigorder {
    display: flex;
    gap: 6px;
    height: 19px;
    border-bottom: 1px solid #800000;
    color: #ffff80;
    font-size: 16px;
    line-height: 18px;
    white-space: nowrap;
}
.bigorder b {
    font: bold 14px "Roboto", sans-serif;
}
.bigorder .green {
    color: #00e600;
}
.bigorder a {
    margin: 0 1px 0 auto;
    color: #ffff00;
}
.facts {
    width: 100%;
    table-layout: fixed;
    border-collapse: collapse;
    border-bottom: 1px solid #800000;
}
.facts th, .facts td {
    height: 18px;
    padding: 0 0 0 2px;
    line-height: 18px;
    text-align: left;
    white-space: nowrap;
    font-size: 16px;
    font-weight: normal;
}
.facts th {
    width: 72px;
}
.facts td {
    width: 55px;
    padding: 0 2px 0 0;
    text-align: right;
    font-family: "Roboto", "Noto Sans CJK SC", sans-serif;
    font-size: 14px;
    font-weight: bold;
}
.facts i {
    font-size: 16px;
    font-weight: normal;
}
.now {
    display: flex;
    align-items: center;
    height: 36px;
    padding: 0 1px 0 2px;
    font-size: 15px;
}
.now em, .now time {
    width: 55px;
    padding-right: 3px;
    text-align: right;
    color: #ff3232;
    font-size: 13px;
}
.now time {
    flex: 1;
    padding: 0;
    color: #c0c0c0;
}
#minute {
    width: 258px;
    height: 266px;
}
.minitabs {
    display: flex;
    height: 18px;
    border: solid #800000;
    border-width: 1px 0;
}
.minitabs button {
    width: 26px;
    padding-top: 2px;
    border-right: 1px solid #800000;
    line-height: 14px;
}
.minitabs .active {
    background: #800000;
    color: #fff;
}

/* index strip and status bar */
.indexes {
    display: flex;
    height: 20px;
    border: solid #800000;
    border-width: 2px 0;
}
.indexes div {
    flex: 1;
    display: grid;
    grid-template-columns: 18px 77fr 85fr 98fr 100fr 22fr;
    align-items: center;
    padding-left: 2px;
    border-right: 1px solid #800000;
    font-size: 15px;
}
.indexes .long {
    grid-template-columns: 66px 69fr 77fr 85fr 85fr 18fr;
    border: none;
    font-size: 16px;
}
.indexes b {
    text-align: right;
    color: #00e600;
    font: bold 14px/16px "Roboto", "Noto Sans CJK SC", sans-serif;
}
.indexes .cyan {
    color: #00e4ff;
}
.indexes i {
    font-size: 16px;
    font-weight: normal;
}
.status {
    display: flex;
    height: 21px;
    border-bottom: 3px solid #d4d0c8;
}
.status button {
    padding: 2px 4px 0 3px;
    border-right: 1px solid #800000;
    line-height: 16px;
}
.status .bot {
    padding: 0 8px;
}
.status p {
    margin: 0;
    overflow: hidden;
    white-space: nowrap;
    color: #ffff00;
    font-size: 13px;
    font-weight: bold;
    line-height: 18px;
}
.status .ticker {
    margin-left: auto;
}
.status p b {
    font-size: 14px;
}
.status .next {
    width: 46px;
    margin-left: 68px;
}
.status input {
    width: 255px;
    height: 18px;
    padding: 1px 4px 0;
    border: none;
    border-left: 1px solid #800000;
    background: #c0c0c0;
    font: inherit;
}
.status input::placeholder {
    color: #111;
    opacity: 1;
}
.clock {
    width: 24px;
    font: bold 14px/18px "Roboto", sans-serif;
}

/* layers above the page */
.watermark {
    position: absolute;
    right: 48px;
    bottom: 23px;
    display: flex;
    align-items: center;
    height: 58px;
    color: rgba(255, 255, 255, 0.7);
    font-size: 45px;
    font-weight: 500;
    line-height: 58px;
    pointer-events: none;
}
.watermark path {
    fill: none;
    stroke: rgba(255, 255, 255, 0.7);
    stroke-width: 5;
}
.brand {
    display: flex;
    gap: 6px;
    margin-left: 9px;
    font-size: 48px;
}
.colon {
    width: 40px;
    padding-left: 9px;
}
.tip {
    position: absolute;
    right: 26px;
    bottom: 2px;
    width: 88px;
    height: 27px;
    padding: 1px 0 0 5px;
    background: #ffffe1;
    border: 1px solid #222;
    color: #000;
    line-height: 13px;
}
.tip em {
    display: block;
    font-family: "Liberation Mono", "Noto Sans CJK SC", monospace;
    font-size: 10px;
    font-style: italic;
    line-height: 11px;
    white-space: nowrap;
}
```
FILE: script.js
```js
const NS = "http://www.w3.org/2000/svg";
const RED = "#ff3232", CYAN = "#54ffff", LINE = "#800000";

const add = (parent, tag, attrs, text) => {
    const el = document.createElementNS(NS, tag);
    for (const key in attrs) el.setAttribute(key, attrs[key]);
    if (text !== undefined) el.textContent = text;
    parent.appendChild(el);
    return el;
};
const $ = (id) => document.getElementById(id);
const xOf = (i) => 5.5 + i * 10;
const dotted = (svg, y) => add(svg, "line", { x1: 0, x2: "100%", y1: y, y2: y, stroke: LINE, "stroke-dasharray": "1 2" });
const label = (svg, x, y, text, fill, extra) => add(svg, "text", Object.assign({ x, y, fill, "font-size": 12 }, extra), text);
const rect = (svg, x, y, w, h, fill, stroke) => add(svg, "rect", { x, y, width: w, height: h, fill, stroke: stroke || "none", "shape-rendering": "crispEdges" });
const line = (svg, points, stroke) => add(svg, "polyline", { points, fill: "none", stroke, "shape-rendering": "crispEdges" });

// kind, high, body top, body bottom, low
const bars = `r 278 291 297 299|c 289 291 305 311|c 301 301 313 327|c 315 319 331 347|r 315 321 329 331|r 307 319 320 325|r 319 327 329 337
c 399 403 476 479|r 437 452 468 474|r 439 446 463 520|r 409 420 426 435|r 418 428 430 437|r 407 420 421 426|r 418 420 424 433|r 418 420 424 443
r 405 413 422 428|r 403 407 415 424|r 371 371 409 413|c 405 407 409 430|c 405 413 415 422|c 407 413 422 426|r 407 413 422 422|c 411 415 430 430
c 424 435 437 441|c 433 437 446 446|r 424 424 441 441|r 405 413 415 422|r 403 409 418 424|c 405 407 411 418|r 401 405 406 409|c 392 394 405 407
r 392 392 405 409|c 392 399 401 403|c 392 403 404 405|r 386 396 403 407|c 396 399 400 405|r 392 394 399 401|c 392 396 411 411|c 401 409 418 420
r 407 415 420 422|c 413 415 424 433|r 415 420 422 426|r 409 411 418 422|c 411 411 422 426|c 420 424 426 428|r 407 411 422 424|c 407 407 413 420
r 394 394 411 411|r 390 392 393 401|c 388 390 394 405|r 378 382 394 396|c 376 380 384 386|c 376 382 386 390|r 376 386 388 390|r 376 380 384 386
c 369 376 378 392|c 376 382 396 403|r 388 392 394 401|r 382 388 394 399|r 376 378 384 388|r 371 376 380 384|r 367 376 377 378|r 343 355 371 376
c 347 353 355 361|r 343 343 355 359|r 331 333 337 347|c 325 327 331 341|c 327 331 345 347|r 341 345 346 349|r 327 329 345 345|c 323 325 339 341
r 321 323 335 337|r 305 315 321 329|r 307 315 319 319|c 311 315 339 345|c 337 341 343 351|r 337 339 341 347|r 317 323 337 339|r 282 285 311 315
r 242 243 284 295|c 232 243 264 270|r 243 245 270 270|r 217 242 243 249|c 251 259 266 276|c 257 270 271 278|r 257 268 272 276|c 274 274 305 309
r 293 297 305 305|r 289 297 305 311|r 291 295 296 301|r 285 289 297 301|c 280 282 284 303|r 184 204 285 289|c 186 186 227 245|r 130 156 232 243
c 144 156 163 188|c 165 172 214 215|r 158 172 208 208|c 168 172 183 194|c 179 186 192 203|r 177 184 195 199|c 174 174 192 201|r 186 190 194 210
r 152 159 177 183|c 158 163 164 177|c 183 195 223 223|c 210 223 228 264|c 215 227 228 238|r 214 217 223 238|c 206 212 234 247|c 225 228 259 260
c 249 260 270 287|r 245 247 270 282|r 227 228 247 247|r 195 221 228 234|r 212 217 227 240|r 212 214 221 230|r 192 204 212 214`
    .split(/[|\n]/).map((s) => s.trim().split(" "));
const FIRST = 6;
const kinds = ["r", "c", "r", "c", "r", "r"].concat(bars.map((b) => b[0]));

const volumes = [10, 7, 7, 8, 18, 19, 14, 9, 11, 12, 7, 6, 7, 21, 15, 14, 13, 8, 9, 6, 7, 5, 4, 8, 17, 8, 7, 6, 5, 5, 6, 6, 7, 5, 5, 8, 6, 5, 5, 6,
    5, 5, 6, 5, 4, 4, 5, 4, 4, 5, 4, 5, 4, 8, 4, 4, 7, 5, 6, 4, 4, 5, 4, 4, 4, 4, 5, 6, 11, 9, 7, 7, 6, 7, 4, 6, 5, 5, 9, 7,
    10, 6, 5, 8, 13, 20, 21, 13, 16, 11, 9, 9, 11, 6, 5, 7, 7, 9, 48, 37, 59, 39, 33, 26, 24, 16, 12, 15, 12, 25, 16, 30, 19, 15, 15, 14, 10, 11, 10, 10,
    13, 10, 11, 21];

const histogram = [16, 13, 10, 6, 7, 10, 12, 9, 5, -1, -4, -5, -7, -35, -46, -50, -45, -42, -35, -29, -23, -17, -11, -1, 1, 1, -1, 2, -1, -1, -3, -1, 4, 8, 10, 12, 13, 16, 15, 14,
    14, 14, 13, 10, 6, 4, 1, 1, 1, 1, -1, 1, 2, 6, 8, 10, 12, 13, 12, 11, 11, 11, 8, 4, 3, 4, 5, 5, 8, 9, 12, 15, 16, 13, 10, 11, 8, 9, 10, 10,
    4, -1, -3, -2, 5, 17, 20, 23, 24, 18, 12, 8, -3, -9, -13, -15, -15, -13, 3, 8, 25, 32, 24, 25, 22, 16, 12, 7, 2, 5, 5, -9, -19, -25, -26, -29, -35, -40, -37, -30,
    -22, -16, -11, -6];

const drawCandles = () => {
    const svg = $("candles");
    [0.5, 63.5, 130.5, 200.5, 273.5, 351.5].forEach((y) => dotted(svg, y));
    const g = add(svg, "g", { transform: "translate(0 -109)" });
    bars.forEach(([kind, high, top, bottom, low], n) => {
        const x = xOf(n + FIRST), color = kind === "r" ? RED : CYAN;
        rect(g, x - 0.5, +high, 1, low - high, color);
        if (kind === "r" && bottom - top > 2) rect(g, x - 3, +top + 0.5, 6, bottom - top - 1, "#000", RED);
        else rect(g, x - 3.5, +top, 7, bottom - top, color);
    });
    [138, 268, 468, 558, 708, 738, 1138, 1258].forEach((x) => add(g, "path", { d: `M${x - 22} 109l4.500 4.500-4.500 4.500-4.500-4.500z`, fill: "#2e9bc9" }));
    // unfilled gap zone
    add(g, "rect", { x: 1115, y: 177, width: "100%", height: 6, fill: "#787878" });
    add(g, "circle", { cx: 1115, cy: 177, r: 1.5, fill: "#fff", stroke: "#b00" });
    label(g, 1118, 173, "7.75-7.72", "#c0c0c0", { "font-family": "Liberation Mono" });
    add(g, "path", { d: "M1006 130.500h12M1006 130.500l4-2v4zM156 519.500h12M156 519.500l4-2v4z", stroke: "#c0c0c0", fill: "#c0c0c0" });
    label(g, 1019, 134, "8.02", "#c0c0c0");
    label(g, 169, 523, "6.06", "#c0c0c0");
    label(g, 512, 539, "L", "#00e4ff", { "font-weight": "bold" });
    label(g, 571, 539, "q", RED, { "font-weight": "bold" });
    rect(g, 1110, 529, 12, 12, "#800000");
    label(g, 1110, 539, "财", "#fff", { "font-size": 11 });
};

const average = (n) => volumes.map((v, i) => {
    const part = volumes.slice(Math.max(0, i - n + 1), i + 1);
    return `${xOf(i)},${(60 - part.reduce((a, b) => a + b) / part.length).toFixed(1)}`;
}).join(" ");

const drawVolume = () => {
    const svg = $("volume");
    dotted(svg, 0.5);
    dotted(svg, 30.5);
    volumes.forEach((v, i) => {
        const x = xOf(i);
        if (kinds[i] === "r") rect(svg, x - 4, 60.5 - v, 7, v - 1, "#000", RED);
        else rect(svg, x - 4.5, 60 - v, 8, v, CYAN);
    });
    line(svg, average(5), "#ffff00");
    line(svg, average(10), "#fff");
};

const shift = (text) => text.trim().split(/\s+/).map((p) => {
    const [x, y] = p.split(",");
    return `${x - 22},${y - 665}`;
}).join(" ");

const drawMacd = () => {
    const svg = $("macd");
    [0.5, 2.5, 56.5].forEach((y) => dotted(svg, y));
    histogram.forEach((v, i) => rect(svg, xOf(i) - 0.5, v > 0 ? 56 - v : 57, 1, Math.abs(v), v > 0 ? RED : "#00e600"));
    line(svg, shift(`27,700 48,700 57,702 72,699 86,696 103,696 113,700 118,702 131,704 147,707 157,724 168,736 178,744 192,749 207,753 220,753 237,752 247,750 257,744 297,744
        310,744 327,747 340,744 357,740 375,736 398,730 422,726 445,723 460,725 487,727 515,727 530,728 547,727 558,725 575,721 592,717 605,715 617,714 630,711 637,711 648,713
        665,713 682,713 700,711 713,708 728,704 740,699 760,698 782,697 800,696 816,693 832,695 840,699 848,700 857,699 867,696 877,688 890,683 907,675 922,677 937,679 947,685
        957,690 967,693 983,697 997,699 1003,694 1017,687 1027,677 1037,668 1047,669 1057,665 1085,665 1097,668 1108,669 1127,667 1132,669 1140,676 1157,689 1175,697 1187,706
        1198,714 1207,716 1220,716 1240,714 1257,711`), "#fff");
    line(svg, shift(`27,708 40,706 57,704 70,703 90,700 113,699 130,701 147,702 160,708 187,724 215,738 230,742 245,744 297,744 325,745 345,745 375,740 405,735 440,729 462,727
        547,727 562,727 578,724 605,721 640,716 670,715 700,714 720,711 757,704 785,701 825,697 837,697 852,698 867,697 887,693 910,687 935,684 952,683 967,687 980,689 997,692
        1012,691 1027,687 1047,681 1067,676 1085,672 1110,670 1137,669 1150,674 1180,683 1205,696 1225,703 1240,706 1257,708`), "#ffff00");
    const g = add(svg, "g", { transform: "translate(-22 -665)" });
    [[117, 688], [287, 731], [307, 731], [497, 714], [517, 714], [837, 685], [947, 672], [1137, 665]].forEach(([x, y]) =>
        add(g, "path", { d: `M${x - 2} ${y}h5v6h2l-4.500 8-4.500-8h2z`, fill: "#00e600" }));
    [[267, 744], [297, 743], [347, 743], [507, 727], [537, 727], [867, 695], [1007, 690]].forEach(([x, y]) =>
        add(g, "path", { d: `M${x - 2} ${y + 14}h5v-6h2l-4.500-8-4.500 8h2z`, fill: RED }));
};

const drawAxes = () => {
    const price = $("axisPrice"), macd = $("axisMacd"), months = $("months");
    [["8.15", 25], ["7.79", 88], ["7.42", 155], ["7.05", 225], ["6.69", 298], ["6.33", 376]].forEach(([t, y]) => label(price, 1, y, t, RED));
    label(price, 1, 479, "9758", "#c0c0c0");
    label(price, 1, 509, "4959", "#c0c0c0");
    rect(price, 0.5, 520.5, 29, 14, "none", LINE);
    label(price, 1, 532, "X100", "#c0c0c0");
    label(macd, 1, 27, "+0.189", RED);
    label(macd, 1, 81, "+0", RED);
    [["03", 0], ["04", 105], ["05", 315], ["06", 505], ["07", 705], ["08", 935], ["09", 1145]].forEach(([t, x]) => {
        rect(months, x, 0, 1, 3, LINE);
        label(months, x + 1, 12, t, RED);
    });
};

const drawMinute = () => {
    const svg = $("minute");
    const seg = (x1, y1, x2, y2, w, dash) => add(svg, "line", { x1, y1, x2, y2, stroke: LINE, "stroke-width": w || 1, "stroke-dasharray": dash || "none", "shape-rendering": "crispEdges" });
    [34.5, 57.5, 80.5, 103.5, 150.5, 173.5, 196.5, 246.5, 271.5, 295.5].forEach((y) => seg(49, y, 219, y));
    seg(49, 127.5, 219, 127.5, 3);
    seg(49, 221, 219, 221, 2);
    [49.5, 92.5, 176.5, 218.5].forEach((x) => seg(x, 34, x, 296));
    seg(135, 34, 135, 296, 2);
    [71.5, 113.5, 155.5, 197.5].forEach((x) => seg(x, 34, x, 296, 1, "1 2"));

    ["7.67", "7.64", "7.61", "7.58", "7.55", "7.52", "7.49", "7.46", "7.43"].forEach((t, i) => {
        const color = i < 4 ? RED : i === 4 ? "#fff" : "#00e600";
        const y = [40, 62, 85, 108, 132, 155, 178, 201, 225][i];
        label(svg, 48, y, t, color, { "text-anchor": "end" });
        label(svg, 221, y, ["1.59%", "1.21%", "0.82%", "0.42%", "0.00%", "0.39%", "0.78%", "1.18%", "1.59%"][i], color);
    });
    label(svg, 47, 251, "5491", "#00e4ff", { "text-anchor": "end" });
    label(svg, 47, 276, "2746", "#00e4ff", { "text-anchor": "end" });

    const spikes = { 1: 58, 2: 75, 4: 48, 8: 69, 9: 51, 11: 38, 12: 44, 46: 51, 48: 47, 51: 74, 52: 43, 62: 37, 80: 58, 84: 49, 105: 24, 119: 26, 124: 21, 132: 25, 146: 30, 153: 29, 157: 26, 162: 24, 167: 20, 20: 22, 32: 21, 41: 25 };
    const colors = ["#ffff80", "#fff", CYAN, "#fff", CYAN, "#ffff80", "#fff"];
    for (let i = 0; i < 169; i++) {
        const h = spikes[i] || 3 + (i * 37 + i * i * 11) % (i < 66 ? 22 : 15);
        const color = [1, 51, 80, 105, 119, 146].includes(i) ? "#ffff80" : colors[(i * i + i * 3) % 7];
        rect(svg, 50 + i, 296 - h, 1, h, color);
    }
    line(svg, "50,120 52,95 56,81 60,82 70,88 77,92 95,92 102,83 108,80 127,81 140,77 165,76 185,77 205,78 218,79", "#ffff80");
    line(svg, `50,120 51,105 52,50 53,75 54,85 56,57 57,70 58,80 60,97 61,85 63,100 64,110 65,120 66,104 68,120 69,104 70,127 71,127 72,115 73,103 74,103 76,92 78,88 79,103 80,88
        82,103 84,93 86,103 87,97 88,103 91,103 93,75 95,80 97,50 99,42 100,57 102,42 103,65 106,50 108,42 109,60 111,80 112,95 114,103 115,90 117,103 119,90 120,95 122,80 124,88
        126,65 128,57 130,65 132,42 135,55 137,72 138,50 139,72 141,60 143,72 146,57 149,72 151,65 152,73 155,65 156,73 158,57 160,68 163,72 165,65 167,73 171,57 172,73 176,75
        177,88 179,80 181,88 183,96 190,96 191,88 192,96 193,88 194,96 196,88 197,73 200,78 204,80 205,88 207,82 208,96 209,88 211,90 213,96 216,103 218,90`, "#fff");
};

drawCandles();
drawVolume();
drawMacd();
drawAxes();
drawMinute();
```
